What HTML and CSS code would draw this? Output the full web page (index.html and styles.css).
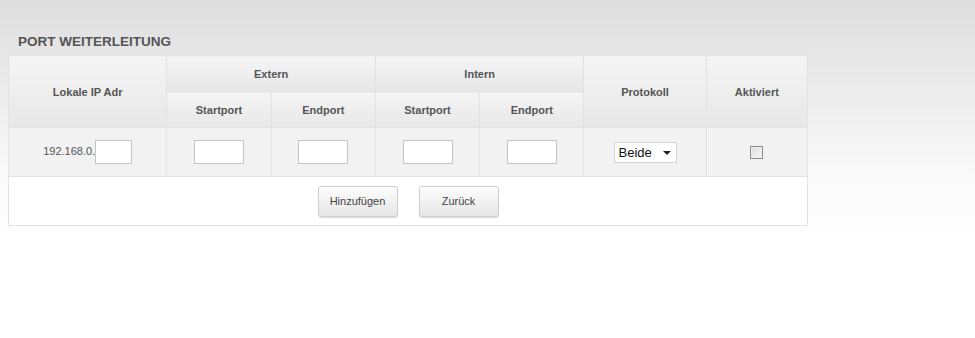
FILE: index.html
```html
<!DOCTYPE html>
<html lang="de">
<head>
  <meta charset="UTF-8" />
  <title>Port Weiterleitung</title>
  <link rel="stylesheet" href="styles.css">
</head>
<body>
  <div class="page">
    <h2 class="title">PORT WEITERLEITUNG</h2>

    <table class="pf-table">
      <colgroup>
        <col class="c-ip"><col class="c-port"><col class="c-port"><col class="c-port"><col class="c-port"><col class="c-proto"><col class="c-act">
      </colgroup>
      <thead>
        <tr>
          <th rowspan="2">Lokale IP Adr</th>
          <th colspan="2">Extern</th>
          <th colspan="2">Intern</th>
          <th rowspan="2">Protokoll</th>
          <th rowspan="2">Aktiviert</th>
        </tr>
        <tr>
          <th>Startport</th>
          <th>Endport</th>
          <th>Startport</th>
          <th>Endport</th>
        </tr>
      </thead>
      <tbody>
        <tr class="data-row">
          <td>192.168.0.<input type="text" class="ip-input"></td>
          <td><input type="text" class="port-input"></td>
          <td><input type="text" class="port-input"></td>
          <td><input type="text" class="port-input"></td>
          <td><input type="text" class="port-input"></td>
          <td>
            <div class="select-box">
              <span>Beide</span>
              <span class="arrow"></span>
            </div>
          </td>
          <td><input type="checkbox" class="check"></td>
        </tr>
        <tr class="btn-row">
          <td colspan="7">
            <div class="btns">
              <button class="btn">Hinzufügen</button>
              <button class="btn">Zurück</button>
            </div>
          </td>
        </tr>
      </tbody>
    </table>
  </div>
</body>
</html>
```

FILE: styles.css
```css
html, body {
  margin: 0;
  height: 100%;
}

body {
  font-family: 'Liberation Sans', Arial, sans-serif;
  background: linear-gradient(to bottom, #dedede 0px, #ececec 90px, #fafafa 180px, #ffffff 240px);
  color: #555;
}

.page {
  padding: 36px 0 0 8px;
}

.title {
  margin: 0 0 7px 10px;
  font-size: 13.5px;
  font-weight: bold;
  color: #555;
  line-height: 12px;
}

.pf-table {
  border-collapse: collapse;
  width: 800px;
  table-layout: fixed;
  background: #fff;
}

.c-ip { width: 158px; }
.c-port { width: 104px; }
.c-proto { width: 122px; }
.c-act { width: 101px; }

.pf-table th,
.pf-table td {
  border: 1px solid #e2e2e2;
  text-align: center;
  padding: 0;
}

.pf-table th {
  height: 35px;
  font-size: 11px;
  font-weight: bold;
  color: #555;
  background: linear-gradient(to bottom, #f5f5f5, #e7e7e7);
}

.data-row td {
  height: 48px;
  background: #f2f2f2;
  font-size: 11px;
  color: #555;
}

input[type="text"] {
  box-sizing: border-box;
  height: 24px;
  border: 1px solid #c4c4c4;
  background: #fff;
  margin: 0;
  padding: 2px;
  vertical-align: middle;
  font-family: inherit;
}

.ip-input {
  width: 37px;
}

.port-input {
  width: 50px;
}

.select-box {
  display: inline-flex;
  align-items: center;
  justify-content: space-between;
  box-sizing: border-box;
  width: 63px;
  height: 21px;
  border: 1px solid #d4d4d4;
  background: #fff;
  padding: 0 5px 0 4px;
  font-family: 'Liberation Sans', Arial, sans-serif;
  font-size: 13px;
  color: #111;
  margin-top: 1px;
}

.arrow {
  width: 0;
  height: 0;
  border-left: 4px solid transparent;
  border-right: 4px solid transparent;
  border-top: 4px solid #222;
}

.check {
  box-sizing: border-box;
  appearance: none;
  width: 13px;
  height: 13px;
  margin: 0;
  vertical-align: middle;
  border: 1px solid #8a8a8a;
  background: linear-gradient(135deg, #dcdcdc, #f8f8f8);
  box-shadow: inset 0 0 0 1px #eee;
}

.btn-row td {
  height: 48px;
  background: #fff;
}

.btns {
  display: flex;
  justify-content: center;
  gap: 21px;
}

.btn {
  width: 80px;
  height: 31px;
  border: 1px solid #cfcfcf;
  border-radius: 3px;
  background: linear-gradient(to bottom, #fdfdfd, #e6e6e6);
  box-shadow: 0 1px 1px rgba(0,0,0,0.15);
  font-family: 'Liberation Sans', Arial, sans-serif;
  font-size: 11px;
  color: #444;
  cursor: pointer;
  padding: 0;
}
```
